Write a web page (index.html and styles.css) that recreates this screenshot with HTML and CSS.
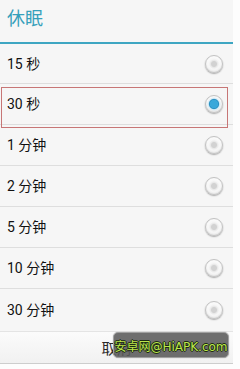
FILE: index.html
```html
<!DOCTYPE html>
<html lang="zh-CN">
<head>
<meta charset="utf-8">
<title>休眠</title>
<link rel="stylesheet" href="styles.css">
</head>
<body>
<div class="screen">
  <div class="dialog">
    <div class="header"><span class="title">休眠</span></div>
    <div class="accent"></div>
    <ul class="list">
      <li class="row first"><span class="label">15 秒</span><span class="radio"></span></li>
      <li class="row selected"><span class="label">30 秒</span><span class="radio on"></span></li>
      <li class="row"><span class="label">1 分钟</span><span class="radio"></span></li>
      <li class="row"><span class="label">2 分钟</span><span class="radio"></span></li>
      <li class="row"><span class="label">5 分钟</span><span class="radio"></span></li>
      <li class="row"><span class="label">10 分钟</span><span class="radio"></span></li>
      <li class="row last"><span class="label">30 分钟</span><span class="radio"></span></li>
    </ul>
    <div class="buttons"><span class="btn">取消</span></div>
  </div>
  <div class="toast">安卓网@HiAPK.com</div>
</div>
</body>
</html>
```

FILE: styles.css
```css
* { box-sizing: border-box; }
html, body { margin: 0; padding: 0; }
body {
  width: 240px;
  height: 369px;
  overflow: hidden;
  background: #fdfdfd;
  font-family: "Roboto", "Noto Sans CJK SC", sans-serif;
}
.screen { position: relative; width: 240px; height: 369px; }
.dialog {
  width: 233px;
  background: #f6f6f6;
  display: flex;
  flex-direction: column;
  border-bottom: 1px solid #cdcdcd;
}
.header {
  height: 42px;
  padding: 5px 0 0 7px;
}
.title {
  display: block;
  font-size: 18px;
  line-height: 24px;
  color: #36a0bb;
  font-family: "Noto Sans CJK SC", sans-serif;
}
.accent { height: 2px; background: #3ea6c2; }
.list { list-style: none; margin: 0; padding: 0; }
.row {
  position: relative;
  height: 41px;
  display: flex;
  align-items: center;
  justify-content: space-between;
  padding: 0 10px 0 7px;
  border-bottom: 1px solid #dedede;
}
.row.first { height: 40px; }
.row.last { height: 43px; border-bottom: 1px solid #e4e4e4; }
.row.selected::after {
  content: "";
  position: absolute;
  left: 1px;
  top: 3px;
  width: 225px;
  height: 39px;
  border: 1px solid #c77676;
}
.label {
  font-size: 14px;
  color: #111;
  line-height: 18px;
}
.radio {
  width: 18px;
  height: 18px;
  border-radius: 50%;
  border: 1px solid #c2c2c2;
  background: radial-gradient(circle, #d2d2d2 0 2.5px, #e8e8e8 3.5px, #f6f6f6 5px, #fbfbfb 7.5px);
  box-shadow: 0 1px 1.5px rgba(0,0,0,0.32), inset 0 -1px 2px rgba(0,0,0,0.1);
}
.radio.on {
  background: radial-gradient(circle, #3aa8da 0 3.8px, #2a90c2 4.6px, #d5ecf7 5.6px, #f8f8f8 7px, #fbfbfb 7.5px);
}
.buttons {
  height: 31px;
  display: flex;
  align-items: center;
  justify-content: center;
  background: linear-gradient(#fbfbfb, #f1f1f1);
}
.btn {
  font-size: 15px;
  color: #2a2a2a;
  font-family: "Noto Sans CJK SC", sans-serif;
  line-height: 20px;
}
.toast {
  position: absolute;
  left: 113px;
  top: 332px;
  width: 116px;
  height: 26px;
  border-radius: 5px;
  border: 1px solid #a0a0a0;
  background: rgba(90,90,90,0.88);
  box-shadow: 0 0 1px rgba(0,0,0,0.4);
  display: flex;
  align-items: center;
  justify-content: center;
  font-family: "DejaVu Sans", "Noto Sans CJK SC", sans-serif;
  font-size: 12px;
  color: #bce64c;
  white-space: nowrap;
  text-shadow: 1px 0 0 #1c2a10, -1px 0 0 #1c2a10, 0 1px 0 #1c2a10, 0 -1px 0 #1c2a10;
}
```
